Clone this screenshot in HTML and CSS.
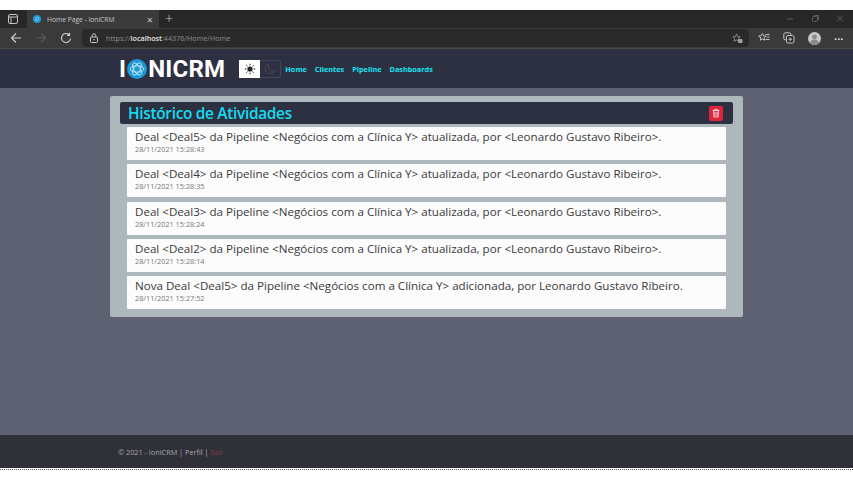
FILE: index.html
```html
<!DOCTYPE html>
<html>
<head>
	<meta charset="utf-8">
	<title>Home Page - IoniCRM</title>
	<link rel="stylesheet" href="styles.css">
</head>
<body>
	<div class="window">
		<div class="tabbar">
			<svg class="tabs-icon" width="12" height="12" viewBox="0 0 12 12"><rect x="1.5" y="1.5" width="9" height="9" rx="1.5" fill="none" stroke="#c4c4c4"/><path d="M1.5 4h9M4 4v6.5" fill="none" stroke="#c4c4c4"/></svg>
			<div class="tab">
				<svg width="8" height="8" viewBox="0 0 10 10"><circle cx="5" cy="5" r="5" fill="#1c9ad6"/><circle cx="5" cy="5" r="2" fill="none" stroke="#bfe6f7" stroke-width=".7"/></svg>
				<span class="tab-title">Home Page - IoniCRM</span>
				<span class="tab-close">×</span>
			</div>
			<span class="new-tab">+</span>
			<div class="win-btns">
				<svg width="8" height="10" viewBox="0 0 8 10"><path d="M1 5h6" stroke="#5e5e5e"/></svg>
				<svg width="8" height="10" viewBox="0 0 8 10"><rect x="1.5" y="2.5" width="5" height="5" rx="1" fill="none" stroke="#5e5e5e"/><path d="M3 1.5h4.5v4.5" fill="none" stroke="#5e5e5e"/></svg>
				<svg width="8" height="10" viewBox="0 0 8 10"><path d="M1 1.5l6 6M7 1.5l-6 6" stroke="#5e5e5e"/></svg>
			</div>
		</div>
		<div class="toolbar">
			<svg class="back" width="12" height="12" viewBox="0 0 12 12"><path d="M11 6H1.5M6 1.5L1.5 6 6 10.5" fill="none" stroke="#d0d0d0" stroke-width="1.1"/></svg>
			<svg class="fwd" width="12" height="12" viewBox="0 0 12 12"><path d="M1 6h9.5M6 1.5L10.5 6 6 10.5" fill="none" stroke="#5a5a5a" stroke-width="1.1"/></svg>
			<svg class="reload" width="12" height="12" viewBox="0 0 12 12"><path d="M10.5 6.5A4.5 4.5 0 1 1 9 2.6M9.5.8v2.6H7" fill="none" stroke="#d0d0d0" stroke-width="1.1"/></svg>
			<div class="address">
				<svg width="10" height="10" viewBox="0 0 10 10"><rect x="1.5" y="4" width="7" height="5.5" rx="1" fill="none" stroke="#c8c8c8"/><path d="M3.2 4V2.6a1.8 1.8 0 0 1 3.6 0V4" fill="none" stroke="#c8c8c8"/><circle cx="5" cy="6.7" r=".8" fill="#c8c8c8"/></svg>
				<span class="url">https://<b>localhost</b>:44376/Home/Home</span>
				<svg class="fav" width="11" height="11" viewBox="0 0 11 11"><path d="M4.5 1l1.1 2.5 2.6.3-1.9 1.8.5 2.6-2.3-1.3-2.3 1.3.5-2.6L.8 3.8l2.6-.3z" fill="none" stroke="#a0a0a0" stroke-width=".8"/><rect x="6" y="6" width="4.5" height="4" rx="1" fill="#a0a0a0"/></svg>
			</div>
			<div class="tools">
				<svg width="12" height="12" viewBox="0 0 12 12"><path d="M4.5 1.5l1 2.3 2.4.3-1.8 1.6.5 2.5-2.1-1.2-2.1 1.2.5-2.5L.6 4.1 3 3.8z" fill="none" stroke="#d0d0d0" stroke-width=".9"/><path d="M7.5 2.5h4M8.5 5h3M7.5 7.5h4" stroke="#d0d0d0" stroke-width=".9"/></svg>
				<svg width="12" height="12" viewBox="0 0 12 12"><rect x=".8" y=".8" width="7" height="7" rx="1.5" fill="none" stroke="#d0d0d0" stroke-width=".9"/><rect x="3.5" y="3.5" width="7.5" height="7.5" rx="1.5" fill="#333" stroke="#d0d0d0" stroke-width=".9"/><path d="M7.2 5.5v3.5M5.5 7.2H9" stroke="#d0d0d0" stroke-width=".9"/></svg>
				<svg width="13" height="13" viewBox="0 0 13 13"><circle cx="6.5" cy="6.5" r="6.5" fill="#c9c9c9"/><circle cx="6.5" cy="5" r="2.4" fill="#8a8a8a"/><path d="M2 11.2a4.6 4.6 0 0 1 9 0a6.5 6.5 0 0 1-9 0z" fill="#8a8a8a"/></svg>
				<span class="more">···</span>
			</div>
		</div>
		<header class="navbar">
			<div class="brand">
				<span>I</span>
				<svg class="logo" width="20" height="20" viewBox="0 0 19 19">
					<circle cx="9.5" cy="9.5" r="9.5" fill="#1c9ad6"/>
					<g fill="none" stroke="#cdeaf8" stroke-width=".8">
						<ellipse cx="9.5" cy="9.5" rx="6.5" ry="3"/>
						<ellipse cx="9.5" cy="9.5" rx="6.5" ry="3" transform="rotate(60 9.5 9.5)"/>
						<ellipse cx="9.5" cy="9.5" rx="6.5" ry="3" transform="rotate(120 9.5 9.5)"/>
					</g>
				</svg>
				<span>NICRM</span>
			</div>
			<div class="theme">
				<span class="theme-btn light">
					<svg width="12" height="12" viewBox="0 0 12 12"><circle cx="6" cy="6" r="2.6" fill="#222"/><path d="M6 .8v1.6M6 9.6v1.6M.8 6h1.6M9.6 6h1.6M2.3 2.3l1.1 1.1M8.6 8.6l1.1 1.1M9.7 2.3L8.6 3.4M3.4 8.6L2.3 9.7" stroke="#222"/></svg>
				</span>
				<span class="theme-btn dark">
					<svg width="12" height="12" viewBox="0 0 12 12"><path d="M4.5 1a5 5 0 1 0 6.3 7A5.5 5.5 0 0 1 4.5 1z" fill="none" stroke="#454a58"/></svg>
				</span>
			</div>
			<nav class="links">
				<a>Home</a>
				<a>Clientes</a>
				<a>Pipeline</a>
				<a>Dashboards</a>
			</nav>
		</header>
		<main class="content">
			<section class="panel">
				<div class="panel-head">
					<h1>Histórico de Atividades</h1>
					<span class="trash">
						<svg width="8" height="10" viewBox="0 0 10 11"><path d="M.8 2.3h8.4M3.5 2V1h3v1M1.8 2.5l.6 8h5.2l.6-8M3.8 4v5M6.2 4v5" fill="none" stroke="#fff" stroke-width="1"/></svg>
					</span>
				</div>
				<div class="items">
					<div class="item">
						<p>Deal &lt;Deal5&gt; da Pipeline &lt;Negócios com a Clínica Y&gt; atualizada, por &lt;Leonardo Gustavo Ribeiro&gt;.</p>
						<small>28/11/2021 15:28:43</small>
					</div>
					<div class="item">
						<p>Deal &lt;Deal4&gt; da Pipeline &lt;Negócios com a Clínica Y&gt; atualizada, por &lt;Leonardo Gustavo Ribeiro&gt;.</p>
						<small>28/11/2021 15:28:35</small>
					</div>
					<div class="item">
						<p>Deal &lt;Deal3&gt; da Pipeline &lt;Negócios com a Clínica Y&gt; atualizada, por &lt;Leonardo Gustavo Ribeiro&gt;.</p>
						<small>28/11/2021 15:28:24</small>
					</div>
					<div class="item">
						<p>Deal &lt;Deal2&gt; da Pipeline &lt;Negócios com a Clínica Y&gt; atualizada, por &lt;Leonardo Gustavo Ribeiro&gt;.</p>
						<small>28/11/2021 15:28:14</small>
					</div>
					<div class="item">
						<p>Nova Deal &lt;Deal5&gt; da Pipeline &lt;Negócios com a Clínica Y&gt; adicionada, por Leonardo Gustavo Ribeiro.</p>
						<small>28/11/2021 15:27:52</small>
					</div>
				</div>
			</section>
		</main>
		<footer class="foot">
			<span>© 2021 - IoniCRM | Perfil | <a class="logout">Sair</a></span>
		</footer>
		<div class="edge"></div>
	</div>
</body>
</html>
```

FILE: styles.css
```css
* {
	box-sizing: border-box;
}
html, body {
	margin: 0;
	background: #fff;
}
body {
	font-family: "Open Sans", "Noto Sans", sans-serif;
}
p, h1 {
	margin: 0;
}
.window {
	width: 853px;
	height: 480px;
	padding: 10px 0 10px;
	display: flex;
	flex-direction: column;
}
.tabbar {
	height: 18px;
	background: #272727;
	display: flex;
	align-items: center;
	color: #c8c8c8;
}
.tabs-icon {
	margin-left: 7px;
}
.tab {
	width: 132px;
	height: 18px;
	margin-left: 8px;
	padding: 0 6px;
	background: #3b3b3b;
	display: flex;
	align-items: center;
	gap: 6px;
}
.tab-title {
	font-size: 6.7px;
	flex: 1;
	white-space: nowrap;
}
.tab-close {
	font-size: 11px;
	line-height: 1;
}
.new-tab {
	margin-left: 6px;
	font-size: 14px;
	line-height: 1;
	font-weight: 300;
}
.win-btns {
	margin-left: auto;
	margin-right: 9px;
	display: flex;
	gap: 17px;
}
.toolbar {
	height: 21px;
	background: #3a3a3a;
	display: flex;
	align-items: center;
	border-bottom: 1px solid #4a4a4a;
}
.back {
	margin-left: 10px;
}
.fwd {
	margin-left: 13px;
}
.reload {
	margin-left: 13px;
}
.address {
	width: 667px;
	height: 18px;
	margin-left: 10px;
	padding: 0 6px 0 7px;
	background: #2a2a2a;
	border-radius: 4px;
	display: flex;
	align-items: center;
	gap: 7px;
}
.url {
	font-size: 7.2px;
	color: #8c8c8c;
	flex: 1;
}
.url b {
	color: #e6e6e6;
	font-weight: 600;
}
.tools {
	margin-left: 9px;
	display: flex;
	align-items: center;
	gap: 13px;
}
.more {
	color: #ddd;
	font-size: 11px;
	font-weight: 700;
	line-height: 1;
}
.navbar {
	height: 39px;
	padding-left: 119px;
	background: #2d3040;
	display: flex;
	align-items: center;
}
.brand {
	display: flex;
	align-items: center;
	gap: 1px;
	color: #fff;
	font-family: Roboto, "Liberation Sans", sans-serif;
	font-size: 24px;
	font-weight: 700;
	letter-spacing: .2px;
	line-height: 1;
}
.theme {
	margin-left: 14px;
	display: flex;
	height: 18px;
}
.theme-btn {
	width: 21px;
	display: flex;
	align-items: center;
	justify-content: center;
}
.light {
	background: #fff;
}
.dark {
	border: 1px solid #41465a;
	border-left: 0;
	border-radius: 0 3px 3px 0;
}
.links {
	margin-left: 4px;
	display: flex;
	gap: 8px;
	font-size: 7.3px;
	font-weight: 700;
	color: #12e4f4;
}
.content {
	flex: 1;
	padding: 8px 110px 0;
	background: #5e6172;
}
.panel {
	height: 221px;
	padding: 6px 10px 0;
	background: #adb8bc;
	border-radius: 2px;
}
.panel-head {
	height: 22px;
	padding: 0 8px;
	background: #2d3040;
	border-radius: 2px;
	display: flex;
	align-items: center;
	justify-content: space-between;
}
.panel-head h1 {
	font-size: 15.4px;
	font-weight: 600;
	letter-spacing: -.3px;
	color: #14dcf0;
	white-space: nowrap;
}
.trash {
	width: 14px;
	height: 15px;
	margin-right: 2px;
	background: #e0243c;
	border-radius: 2px;
	display: flex;
	align-items: center;
	justify-content: center;
}
.items {
	margin: 3px 7px 0;
	display: flex;
	flex-direction: column;
	gap: 4.33px;
}
.item {
	height: 33px;
	padding: 2px 8px 0;
	background: #fcfcfc;
	border-radius: 1px;
}
.item p {
	font-size: 11.6px;
	line-height: 16px;
	color: #3a3a3a;
	white-space: nowrap;
}
.item small {
	display: block;
	font-size: 7.3px;
	line-height: 9px;
	color: #767676;
}
.foot {
	height: 33px;
	padding-left: 118px;
	background: #2f3038;
	display: flex;
	align-items: center;
	font-size: 7.3px;
	color: #a8a8a8;
}
.logout {
	color: #7a3f4a;
}
.edge {
	height: 2px;
	border-bottom: 1px dotted #555;
}
```
